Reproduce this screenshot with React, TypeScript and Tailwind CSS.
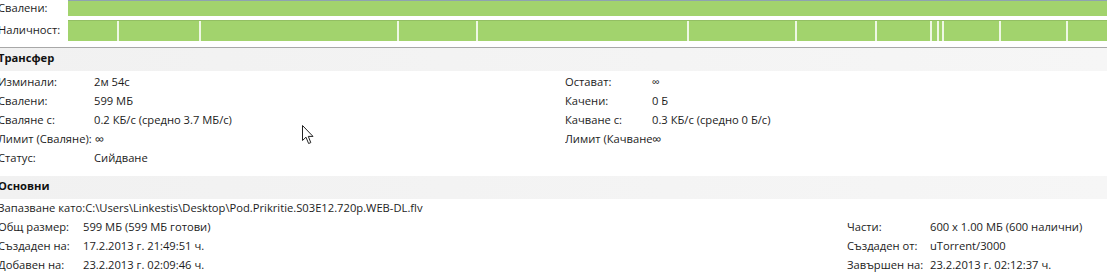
const font = { fontFamily: '"Open Sans", "Noto Sans", sans-serif' };

const pieces = [117, 199, 397, 476, 687, 795, 875, 930, 937, 942, 999, 1066];

function Row({ label, value, min }: { label: string; value: string; min: string }) {
  return (
    <div className="flex h-[19px] items-center whitespace-nowrap">
      <span className={`${min} shrink-0`}>{label}</span>
      <span>{value}</span>
    </div>
  );
}

function Header({ title }: { title: string }) {
  return (
    <div className="flex h-[23px] items-start bg-gradient-to-r from-[#f1f1f1] to-[#f6f6f6] pt-[1px] font-bold leading-[17px] text-[#111]">
      {title}
    </div>
  );
}

function Cursor() {
  return (
    <svg className="absolute left-[302px] top-[125px]" width="12" height="20" viewBox="0 0 12 20">
      <path
        d="M0.5 0.5 L0.5 15.5 L4 12.2 L6.6 18.5 L8.8 17.6 L6.3 11.4 L11 11.4 Z"
        fill="#fff"
        stroke="#222"
        strokeWidth="1"
        strokeLinejoin="round"
      />
    </svg>
  );
}

export default function App() {
  return (
    <div className="relative h-[275px] w-[1107px] overflow-hidden bg-white text-[11.2px] text-[#1c1c1c]" style={font}>
      <div className="-ml-[2px]">
        {/* pieces bars */}
        <div className="flex h-[16px] items-center">
          <span className="w-[70px] shrink-0">Свалени:</span>
          <div className="h-[16px] flex-1 border-t border-[#8fa3b0] bg-[#a2d36d]" />
        </div>
        <div className="mt-[3px] flex h-[22px] items-center">
          <span className="w-[70px] shrink-0">Наличност:</span>
          <div className="relative h-[21px] flex-1 border-t border-[#93bf63] bg-[#a2d36d]">
            {pieces.map((x) => (
              <div
                key={x}
                className="absolute top-0 h-full w-[2px] bg-[#eef7e4]"
                style={{ left: x - 68 }}
              />
            ))}
          </div>
        </div>
      </div>

      <div className="mt-[6px] h-px bg-[#a8a8a8]" />

      <div className="-ml-[2px]">
        <Header title="Трансфер" />
        <div className="mt-[2px] flex">
          <div className="w-[567px] shrink-0">
            <Row min="min-w-[96px]" label="Изминали:" value="2м 54с" />
            <Row min="min-w-[96px]" label="Свалени:" value="599 МБ" />
            <Row min="min-w-[96px]" label="Сваляне с:" value="0.2 КБ/с (средно 3.7 МБ/с)" />
            <div className="flex h-[19px] items-center whitespace-nowrap">
              <span className="min-w-[96px] shrink-0 pr-[3px]">Лимит (Сваляне):</span>
              <span className="text-[13px]">∞</span>
            </div>
            <Row min="min-w-[96px]" label="Статус:" value="Сийдване" />
          </div>
          <div>
            <Row min="min-w-[87px]" label="Остават:" value="∞" />
            <Row min="min-w-[87px]" label="Качени:" value="0 Б" />
            <Row min="min-w-[87px]" label="Качване с:" value="0.3 КБ/с (средно 0 Б/с)" />
            <div className="flex h-[19px] items-center whitespace-nowrap">
              <span className="w-[87px] shrink-0 overflow-hidden">Лимит (Качване):</span>
              <span className="text-[13px]">∞</span>
            </div>
          </div>
        </div>

        <div className="mt-[8px]">
          <Header title="Основни" />
        </div>
        <div className="flex">
          <div className="w-[849px] shrink-0">
            <Row min="min-w-[85px]" label="Запазване като:" value="C:\Users\Linkestis\Desktop\Pod.Prikritie.S03E12.720p.WEB-DL.flv" />
            <Row min="min-w-[85px]" label="Общ размер:" value="599 МБ (599 МБ готови)" />
            <Row min="min-w-[85px]" label="Създаден на:" value="17.2.2013 г. 21:49:51 ч." />
            <Row min="min-w-[85px]" label="Добавен на:" value="23.2.2013 г. 02:09:46 ч." />
          </div>
          <div className="pt-[19px]">
            <Row min="min-w-[83px]" label="Части:" value="600 x 1.00 МБ (600 налични)" />
            <Row min="min-w-[83px]" label="Създаден от:" value="uTorrent/3000" />
            <Row min="min-w-[83px]" label="Завършен на:" value="23.2.2013 г. 02:12:37 ч." />
          </div>
        </div>
      </div>

      <Cursor />
    </div>
  );
}
